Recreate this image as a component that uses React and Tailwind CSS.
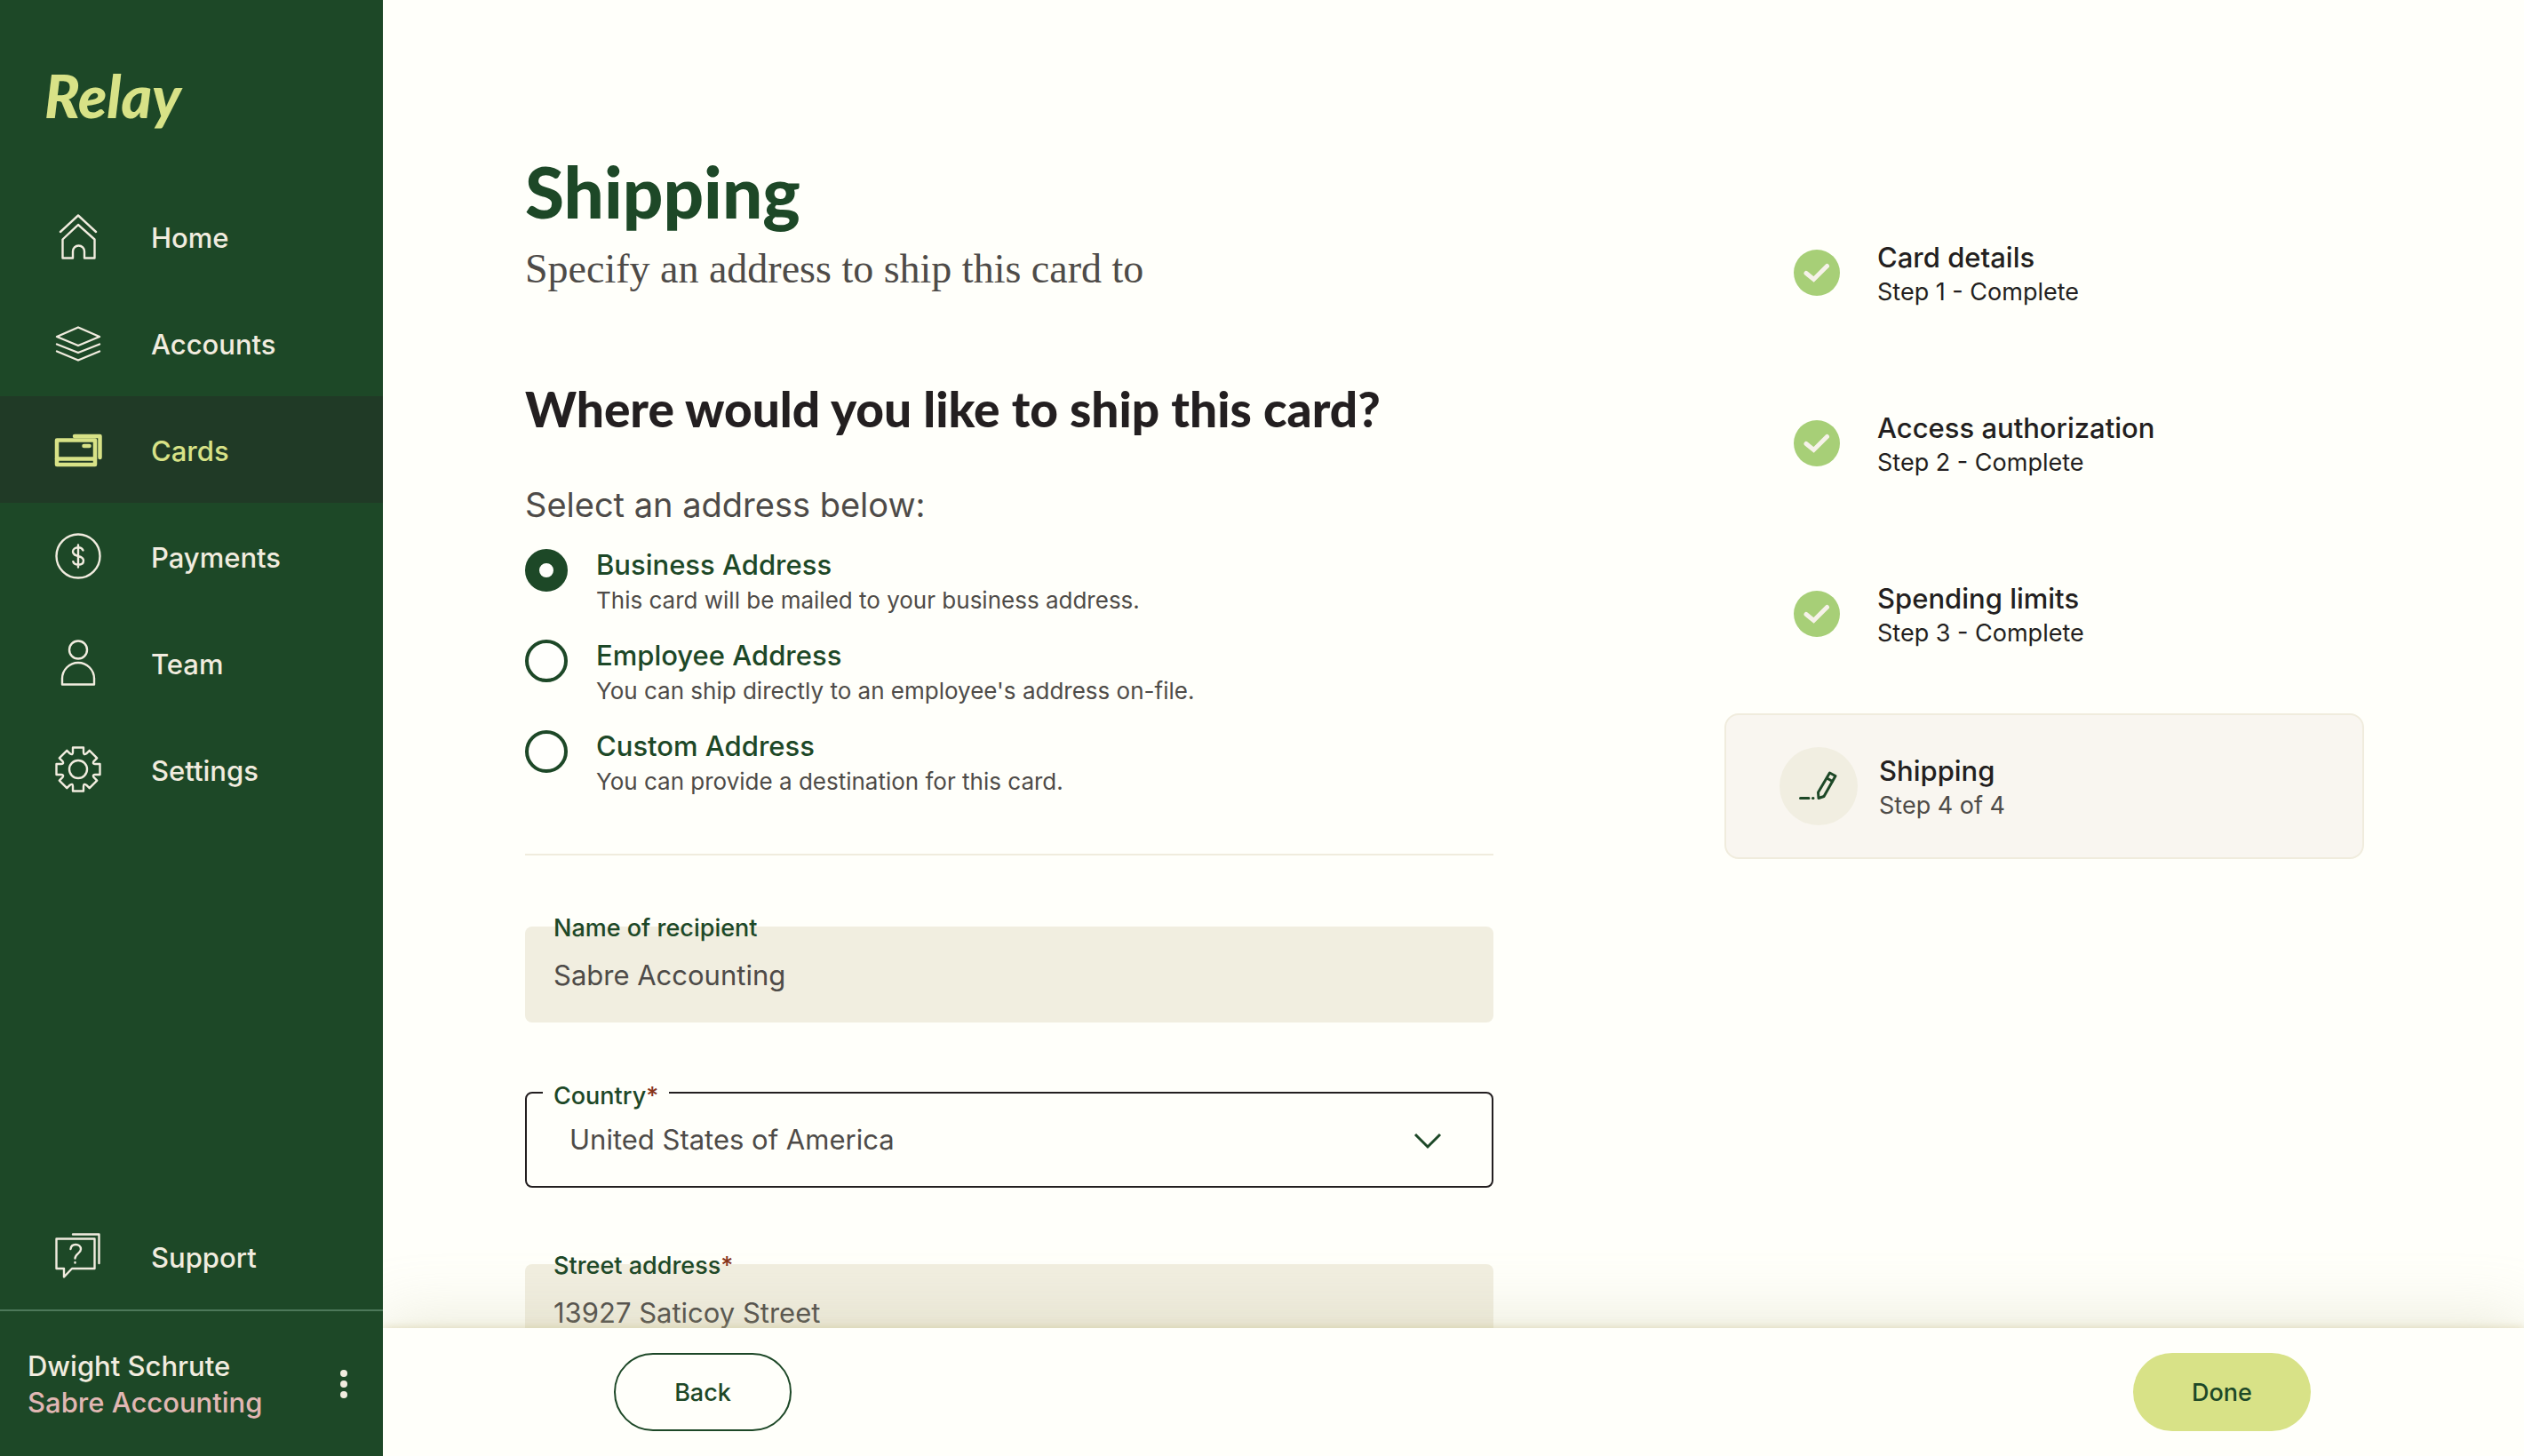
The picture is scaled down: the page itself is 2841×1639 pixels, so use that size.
import React, { useState } from "react";
import clsx from "clsx";

const HomeIcon = () => (
  <svg viewBox="0 0 64 64" className="size-16" fill="none" stroke="currentColor" strokeWidth="2.400" strokeLinecap="round" strokeLinejoin="round">
    <path d="M12 27 32 8.5 52 27" />
    <path d="M32 19 50.5 35.5V56.5H39V49a6.5 6.5 0 0 0-13 0v7.5H14.500V35.500Z" />
  </svg>
);

const AccountsIcon = () => (
  <svg viewBox="0 0 64 64" className="size-16" fill="none" stroke="currentColor" strokeWidth="2.400" strokeLinecap="round" strokeLinejoin="round">
    <path d="M32 14.500 56 25 32 35 8 25Z" />
    <path d="m8 33.500 24 9.500 24-9.500" />
    <path d="m8 41.500 24 10 24-10" />
  </svg>
);

const CardsIcon = () => (
  <svg viewBox="0 0 64 64" className="size-16" fill="none" stroke="currentColor" strokeWidth="4.500" strokeLinecap="round" strokeLinejoin="round">
    <rect x="8" y="21.500" width="43" height="27.500" />
    <path d="M8 42.500h43M38.500 28h6M28 17h28.500v24" />
  </svg>
);

const PaymentsIcon = () => (
  <svg viewBox="0 0 64 64" className="size-16" fill="none" stroke="currentColor" strokeWidth="2.400" strokeLinecap="round" strokeLinejoin="round">
    <circle cx="32" cy="32" r="24.500" />
    <path d="M37.500 25.500c-1-2.200-3-3.200-5.500-3.200-3.500 0-6 2-6 4.800 0 3.200 2.800 4 6 4.900 3.500.9 6 2 6 5s-2.500 4.700-6 4.700c-2.800 0-5-1.200-5.700-3.500M32 19.500v25" />
  </svg>
);

const TeamIcon = () => (
  <svg viewBox="0 0 64 64" className="size-16" fill="none" stroke="currentColor" strokeWidth="2.400" strokeLinecap="round" strokeLinejoin="round">
    <circle cx="32" cy="17.500" r="10" />
    <path d="M14 56.500V50a18 18 0 0 1 36 0v6.500Z" />
  </svg>
);

const SettingsIcon = () => (
  <svg viewBox="-32 -32 64 64" className="size-16" fill="none" stroke="currentColor" strokeWidth="2.400" strokeLinecap="round" strokeLinejoin="round">
    <circle r="10" />
    <path d="M-6-24.500H6V-19Q6.200-15.500 9.200-17.700L12.700-21.200 21.200-12.700 17.700-9.200Q15.500-6.200 19-6H24.500V6H19Q15.500 6.200 17.700 9.200L21.200 12.700 12.700 21.200 9.200 17.700Q6.200 15.500 6 19V24.500H-6V19Q-6.200 15.500-9.200 17.700L-12.700 21.200-21.200 12.700-17.700 9.200Q-15.500 6.200-19 6H-24.500V-6H-19Q-15.500-6.200-17.700-9.200L-21.200-12.700-12.700-21.200-9.200-17.700Q-6.200-15.500-6-19Z" />
  </svg>
);

const SupportIcon = () => (
  <svg viewBox="0 0 64 64" className="size-16" fill="none" stroke="currentColor" strokeWidth="2.400" strokeLinecap="round" strokeLinejoin="round">
    <path d="M7.500 12.500H50.500V46H25L16 55.500V46H7.500Z" />
    <path d="M26 7.500H55.500V40" />
    <path d="M23.500 24c.3-3 2.600-5 5.700-5 3.300 0 5.800 2 5.800 5.200 0 4.800-6.500 5-6.500 10.300M28.500 39v.5" />
  </svg>
);

const CheckIcon = () => (
  <svg viewBox="0 0 52 52" className="size-[52px] shrink-0" aria-hidden="true">
    <circle cx="26" cy="26" r="26" fill="#a7cf77" />
    <path d="M14 26.500 22.500 33.500 37.500 18.500" fill="none" stroke="#f6f2e9" strokeWidth="5" strokeLinecap="round" strokeLinejoin="miter" />
  </svg>
);

const PencilIcon = () => (
  <svg viewBox="0 0 88 88" className="size-[88px] shrink-0" aria-hidden="true">
    <circle cx="44" cy="44" r="44" fill="#f1eee1" />
    <g fill="none" stroke="#1d4827" strokeWidth="3" strokeLinecap="round" strokeLinejoin="round">
      <path d="M56.500 29 63 32.500 50 55.500 44 57.500 43.500 51Z" />
      <path d="M53.500 35 59.500 38.500M23.500 57.500H33M37.500 57.500h.5" />
    </g>
  </svg>
);

const navItems = [
  { id: "home", label: "Home", Icon: HomeIcon },
  { id: "accounts", label: "Accounts", Icon: AccountsIcon },
  { id: "cards", label: "Cards", Icon: CardsIcon },
  { id: "payments", label: "Payments", Icon: PaymentsIcon },
  { id: "team", label: "Team", Icon: TeamIcon },
  { id: "settings", label: "Settings", Icon: SettingsIcon },
];

const addressOptions = [
  {
    id: "business",
    title: "Business Address",
    description: "This card will be mailed to your business address.",
  },
  {
    id: "employee",
    title: "Employee Address",
    description: "You can ship directly to an employee's address on-file.",
  },
  {
    id: "custom",
    title: "Custom Address",
    description: "You can provide a destination for this card.",
  },
];

const steps = [
  { title: "Card details", status: "Step 1 - Complete" },
  { title: "Access authorization", status: "Step 2 - Complete" },
  { title: "Spending limits", status: "Step 3 - Complete" },
  { title: "Shipping", status: "Step 4 of 4", current: true },
];

const NavLink = ({ label, Icon, active }) => (
  <a
    href={`#${label.toLowerCase()}`}
    aria-current={active ? "page" : undefined}
    className={clsx(
      "flex h-[120px] items-center gap-[50px] pl-14 text-[31px] font-medium",
      active ? "bg-[#203a26] text-[#d8e287]" : "text-[#f1ecdf]"
    )}
  >
    <Icon />
    <span className="pt-1">{label}</span>
  </a>
);

// z-10 keeps the footer shadow from falling on the sidebar
const Sidebar = () => (
  <aside className="relative z-10 flex w-[431px] shrink-0 flex-col bg-[#1d4827]">
    <a
      href="#home"
      className="flex h-[206px] items-start pt-[60px] pl-[50px] font-[Lato,sans-serif] text-[66px] leading-[96px] font-black text-[#d8e287] italic"
    >
      Relay
    </a>
    <nav className="flex flex-1 flex-col">
      {navItems.map((item) => (
        <NavLink key={item.id} {...item} active={item.id === "cards"} />
      ))}
      <div className="mt-auto">
        <NavLink label="Support" Icon={SupportIcon} />
      </div>
    </nav>
    <div className="flex h-[165px] items-center justify-between border-t-2 border-[#4d785a] pr-9 pl-[31px]">
      <div className="text-[31px] leading-[41px] font-medium">
        <p className="text-[#f1ecdf]">Dwight Schrute</p>
        <p className="text-[#e1b7b3]">Sabre Accounting</p>
      </div>
      <button type="button" aria-label="Account menu" className="flex flex-col gap-1 p-1">
        <span className="size-2 rounded-full bg-[#f1ecdf]" />
        <span className="size-2 rounded-full bg-[#f1ecdf]" />
        <span className="size-2 rounded-full bg-[#f1ecdf]" />
      </button>
    </div>
  </aside>
);

const FieldLabel = ({ htmlFor, required, children, className }) => (
  <label
    htmlFor={htmlFor}
    className={clsx("absolute text-[27px] leading-8 font-medium text-[#1d4827]", className)}
  >
    {children}
    {required && <span className="text-[#87341a]">*</span>}
  </label>
);

const TextField = ({ id, label, required, defaultValue }) => (
  <div className="relative">
    <FieldLabel htmlFor={id} required={required} className="-top-3.5 left-8">
      {label}
    </FieldLabel>
    <input
      id={id}
      type="text"
      defaultValue={defaultValue}
      className="block h-[108px] w-full rounded-lg bg-[#f1eee0] px-8 text-[31px] text-[#4e4b48] outline-none"
    />
  </div>
);

const AddressOption = ({ option, checked, onSelect }) => (
  <div className="flex gap-8">
    <input
      id={option.id}
      type="radio"
      name="address"
      checked={checked}
      onChange={() => onSelect(option.id)}
      className="mt-0.5 size-12 shrink-0 appearance-none rounded-full border-4 border-[#1d4827] bg-[#fffffc] checked:border-[16px]"
    />
    <label htmlFor={option.id} className="leading-10">
      <span className="block text-[31px] font-medium text-[#1d4827]">{option.title}</span>
      <span className="block text-[26px] text-[#4e4b48]">{option.description}</span>
    </label>
  </div>
);

const ShippingForm = () => {
  const [address, setAddress] = useState("business");

  return (
    <form className="max-w-[1090px] flex-1">
      <h1 className="font-[Lato,sans-serif] text-[80px] leading-[88px] font-black text-[#1d4827]">
        Shipping
      </h1>
      <p className="mt-4 font-['Liberation_Serif',serif] text-[46px] leading-[56px] text-[#4e4b48]">
        Specify an address to ship this card to
      </p>

      <h2 className="mt-[93px] font-[Lato,sans-serif] text-[55px] leading-[72px] font-black text-[#231f20]">
        Where would you like to ship this card?
      </h2>

      <fieldset className="mt-11">
        <legend className="text-[38px] leading-[56px] text-[#4e4b48]">
          Select an address below:
        </legend>
        <div className="mt-5 flex flex-col gap-[22px]">
          {addressOptions.map((option) => (
            <AddressOption
              key={option.id}
              option={option}
              checked={address === option.id}
              onSelect={setAddress}
            />
          ))}
        </div>
      </fieldset>

      <hr className="mt-[61px] border-t-2 border-[#f0ecdd]" />

      <div className="mt-20 flex flex-col gap-[78px]">
        <TextField id="recipient" label="Name of recipient" defaultValue="Sabre Accounting" />

        <div className="relative">
          <FieldLabel
            htmlFor="country"
            required
            className="-top-[11px] left-5 bg-[#fffffa] px-3"
          >
            Country
          </FieldLabel>
          <select
            id="country"
            defaultValue="us"
            className="block h-[108px] w-full appearance-none rounded-lg border-2 border-[#231f20] bg-transparent pl-12 text-[31px] text-[#4e4b48] outline-none"
          >
            <option value="us">United States of America</option>
            <option value="ca">Canada</option>
          </select>
          <svg viewBox="0 0 32 32" className="pointer-events-none absolute top-[39px] right-[58px] size-8" fill="none" stroke="#1d4827" strokeWidth="3">
            <path d="M2 9 16 23 30 9" />
          </svg>
        </div>

        <div className="pt-2">
          <TextField id="street" label="Street address" required defaultValue="13927 Saticoy Street" />
        </div>
      </div>
    </form>
  );
};

const Stepper = () => (
  <ol className="mt-14 flex w-[720px] shrink-0 flex-col gap-8">
    {steps.map(({ title, status, current }) => (
      <li
        key={title}
        aria-current={current ? "step" : undefined}
        className={clsx(
          "flex items-center",
          current
            ? "h-[164px] gap-6 rounded-2xl border-2 border-[#f0ecdd] bg-[#f9f6f0] pl-[60px]"
            : "h-40 gap-[42px] pl-[78px]"
        )}
      >
        {current ? <PencilIcon /> : <CheckIcon />}
        <div className="pt-1 leading-[39px] text-[#231f20]">
          <p className="text-[31px] font-medium">{title}</p>
          <p className={clsx("text-[27px]", current && "text-[#4e4b48]")}>{status}</p>
        </div>
      </li>
    ))}
  </ol>
);

const App = () => (
  <div className="flex h-screen overflow-hidden bg-[#fffffa] font-[Inter,sans-serif]">
    <Sidebar />
    <div className="flex min-w-0 flex-1 flex-col">
      <main className="flex min-h-0 flex-1 justify-between overflow-hidden pt-[171px] pr-[180px] pl-40">
        <ShippingForm />
        <Stepper />
      </main>
      <footer className="relative flex h-36 shrink-0 items-center justify-between bg-[#fffffa] pr-60 pl-[260px] text-[27px] font-medium text-[#1d4827] shadow-[0_-2px_8px_rgba(200,185,130,0.35),0_-10px_70px_rgba(190,190,150,0.3)]">
        <button type="button" className="h-[88px] w-[200px] rounded-full border-2 border-[#1d4827] pt-0.5">
          Back
        </button>
        <button type="button" className="h-[88px] w-[200px] rounded-full bg-[#d8e287] pt-0.5">
          Done
        </button>
      </footer>
    </div>
  </div>
);

export default App;
